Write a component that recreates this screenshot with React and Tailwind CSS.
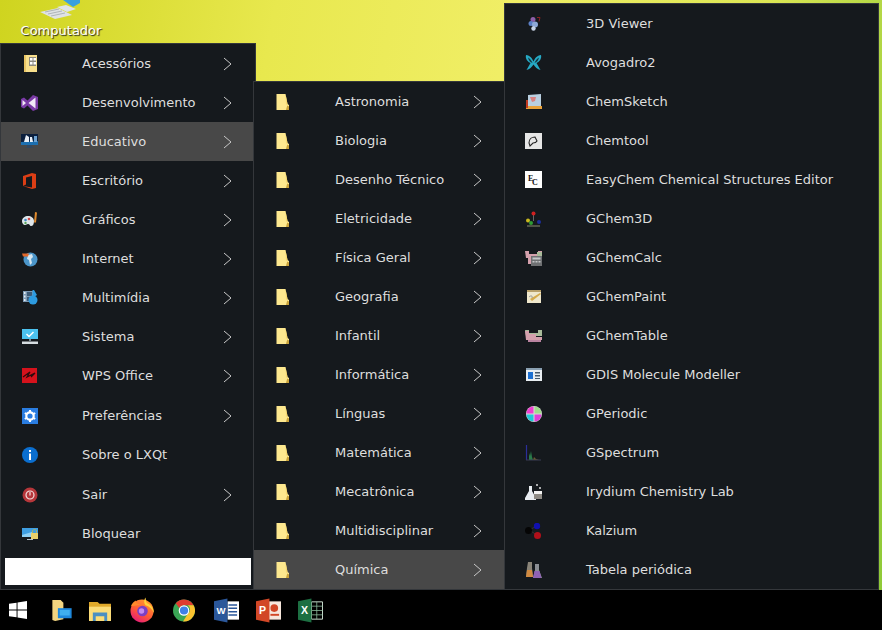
import React from "react";

const Chevron = () => (
  <svg width="9" height="14" viewBox="0 0 9 14" fill="none" className="shrink-0">
    <path d="M1 1l7 6-7 6" stroke="#c9c9c9" strokeWidth="1" />
  </svg>
);

const Folder = () => (
  <svg width="16" height="16" viewBox="0 0 16 16">
    <path d="M1.500 0h9l2 10 1.500 1v5H1.500z" fill="#fde88f" />
    <path d="M10.500 0l2 10-1.500 1z" fill="#f8d870" />
    <path d="M11 16l1.200-4.500 1.800 1V16z" fill="#c9a23a" />
  </svg>
);

// main menu icons
const icons = {
  acessorios: (
    <svg width="16" height="17" viewBox="0 0 16 17">
      <path d="M2 0h13v17H2z" fill="#f8df8c" />
      <path d="M2 0h2v17H2z" fill="#e9c565" />
      <path d="M7 2h7v9H7z" fill="#8d8a80" />
      <path d="M8 3h2.500v2.500H8zM11.500 3H14v2.500h-2.500zM8 7h2.500v2.500H8zM11.500 7H14v2.500h-2.500z" fill="#fff" />
    </svg>
  ),
  vs: (
    <svg width="17" height="16" viewBox="0 0 17 16">
      <path d="M12 0l5 2v12l-5 2-5.500-5.500L3 13.500 0 12V4l3-1.500L6.500 5.500z" fill="#7a3aa6" />
      <path d="M1.500 5v6L5 8zM14.500 2.500L7.500 8l7 5.500z" fill="#f1e8f7" />
    </svg>
  ),
  edu: (
    <svg width="17" height="15" viewBox="0 0 17 15">
      <path d="M0 0h17v11H0z" fill="#0b1f3d" />
      <path d="M0 8l17-1v4H0z" fill="#1c6fb0" />
      <path d="M5 1l3 2v5H3zM9 3h2l1 5H9z" fill="#e8eef5" />
      <path d="M13 2h3v6h-3z" fill="#6ea4d4" />
      <path d="M6 11h5v2l2 1H4l2-1z" fill="#33475e" />
    </svg>
  ),
  office: (
    <svg width="14" height="16" viewBox="0 0 14 16">
      <path d="M0 3l9-3 4 1v14l-4 1-9-3 9 1.500V3l-6 1.500v7L0 13z" fill="#dc3e15" />
    </svg>
  ),
  graficos: (
    <svg width="16" height="16" viewBox="0 0 16 16">
      <path d="M0 9c0-3 3-5 6-5s6 2 6 5-1 5-3 5c-1.500 0-1-2-3-2-1.500 0-2 1.500-3.500 1S0 11 0 9z" fill="#dfe6ea" />
      <circle cx="3.500" cy="8" r="1.300" fill="#3f87c9" />
      <circle cx="7" cy="7" r="1.300" fill="#d34b4b" />
      <circle cx="3.500" cy="11" r="1.200" fill="#58a55c" />
      <path d="M13 0l2 .5-1 10h-2z" fill="#e08a2e" />
    </svg>
  ),
  internet: (
    <svg width="16" height="16" viewBox="0 0 16 16">
      <circle cx="8.500" cy="8.500" r="7" fill="#4b95c9" />
      <path d="M6 4l4-1 1 3-2 2 1 4-2 2-1-5-2-1z" fill="#d7e6ef" />
      <path d="M0 2.500h7l-1 3H1z" fill="#e2682a" />
    </svg>
  ),
  multimidia: (
    <svg width="16" height="15" viewBox="0 0 16 15">
      <path d="M1 1h10v11H1z" fill="#7d99b3" />
      <path d="M2 2h1.500v2H2zM2 5.500h1.500v2H2zM2 9h1.500v2H2z" fill="#e5edf3" />
      <path d="M5 2h5v4H5zM5 7h5v4H5z" fill="#3d5a76" />
      <circle cx="11" cy="10" r="4.500" fill="#2d9be0" />
      <path d="M10.500 0h1.500l3 5-4.500 3z" fill="#2d9be0" />
    </svg>
  ),
  sistema: (
    <svg width="16" height="15" viewBox="0 0 16 15">
      <path d="M0 0h16v10H0z" fill="#4cc2ef" />
      <path d="M4.500 5l2.500 2.500L11.500 3" stroke="#fff" strokeWidth="1.500" fill="none" />
      <path d="M7 10h2v2H7z" fill="#7a8a94" />
      <path d="M0 12.500h16V15H0z" fill="#d6dde1" />
    </svg>
  ),
  wps: (
    <svg width="15" height="15" viewBox="0 0 15 15">
      <path d="M0 0h15v15H0z" fill="#d5121c" />
      <path d="M1 9l7-5-3 5 8-4-4 4" stroke="#2d0a0c" strokeWidth="1.200" fill="none" />
    </svg>
  ),
  preferencias: (
    <svg width="16" height="16" viewBox="0 0 16 16">
      <path d="M0 0h16v16H0z" fill="#2a7de1" />
      <circle cx="8" cy="8" r="3.700" fill="none" stroke="#fff" strokeWidth="2.200" />
      <path d="M8 2v2M8 12v2M2.800 5l1.700 1M11.500 10l1.700 1M2.800 11l1.700-1M11.500 6l1.700-1" stroke="#fff" strokeWidth="2" />
    </svg>
  ),
  sobre: (
    <svg width="16" height="16" viewBox="0 0 16 16">
      <circle cx="8" cy="8" r="8" fill="#0b6fd0" />
      <path d="M7 3h2v2H7zM7 6.500h2V13H7z" fill="#fff" />
    </svg>
  ),
  sair: (
    <svg width="16" height="16" viewBox="0 0 16 16">
      <circle cx="8" cy="8" r="7.500" fill="#b5363a" />
      <circle cx="8" cy="8" r="4" fill="none" stroke="#f3dede" strokeWidth="1.200" />
      <path d="M8 5v3.500" stroke="#f3dede" strokeWidth="1.200" />
    </svg>
  ),
  bloquear: (
    <svg width="16" height="14" viewBox="0 0 16 14">
      <path d="M0 1h16v9H0z" fill="#3f9fe2" />
      <path d="M0 8l10-3v5H0z" fill="#8ed0f5" />
      <path d="M5 12h6v1H5z" fill="#b9c2c8" />
      <path d="M9 6h7v6H9z" fill="#e8cf6a" />
      <path d="M10.500 6V4c0-2 4-2 4 0v2" stroke="#a9b06a" fill="none" />
    </svg>
  ),
};

// chemistry app icons
const apps = {
  viewer: (
    <svg width="16" height="16" viewBox="0 0 16 16">
      <circle cx="7" cy="3.500" r="2.500" fill="#8d5fa8" />
      <circle cx="5" cy="7.500" r="2.500" fill="#5b7fc4" />
      <circle cx="9" cy="8.500" r="3" fill="#8fa9d8" />
      <circle cx="7.500" cy="12.500" r="2.200" fill="#c9d4e6" />
      <path d="M11 1.500h3l-1 4" stroke="#8a2020" fill="none" />
    </svg>
  ),
  avogadro: (
    <svg width="17" height="16" viewBox="0 0 17 16">
      <path d="M1 0c4 0 6.500 4 7.500 6.500C9.500 4 12 0 16 0c1 4-2 7-4.500 8l4 7c-3-.5-5.500-3-7-5.500C7 12 4.500 14.500 1.500 15l4-7C3 7 0 4 1 0z" fill="#26a9c4" />
      <path d="M3 2.500c2 1 3.500 3 4.500 5.500-2-.5-4-2.500-4.500-5.500zM14 2.500c-2 1-3.500 3-4.500 5.500 2-.5 4-2.500 4.500-5.500z" fill="#14343e" />
    </svg>
  ),
  chemsketch: (
    <svg width="16" height="16" viewBox="0 0 16 16">
      <path d="M2 1l13-1v12H2z" fill="#b9cfe0" />
      <path d="M4 3h6l-1 4-3 1z" fill="#d88080" />
      <path d="M0 12h16v3H0z" fill="#e8a13a" />
      <path d="M0 6h2v8H0z" fill="#c23a20" />
    </svg>
  ),
  chemtool: (
    <svg width="17" height="16" viewBox="0 0 17 16">
      <path d="M0 0h17v16H0z" fill="#e6e6e6" />
      <path d="M4 10c0-4 3-6 6-6l2 4c-1 2-3 2-4 2l-3 3z" fill="none" stroke="#222" strokeWidth="1.100" />
    </svg>
  ),
  easychem: (
    <svg width="17" height="17" viewBox="0 0 17 17">
      <path d="M0 0h17v17H0z" fill="#fff" />
      <text x="3" y="10" fontSize="8" fontFamily="Liberation Serif" fontWeight="700" fill="#111">E</text>
      <text x="7" y="14" fontSize="8" fontFamily="Liberation Serif" fontWeight="700" fill="#111">C</text>
    </svg>
  ),
  gchem3d: (
    <svg width="17" height="16" viewBox="0 0 17 16">
      <path d="M8.500 3v7" stroke="#666" />
      <circle cx="8.500" cy="2.500" r="2" fill="#d02020" />
      <circle cx="3" cy="9.500" r="2" fill="#c9b81e" />
      <circle cx="6" cy="12" r="2" fill="#2f9c33" />
      <circle cx="14" cy="11" r="2" fill="#1c2f9c" />
      <path d="M2 15h13" stroke="#8b8f70" />
    </svg>
  ),
  gchemcalc: (
    <svg width="17" height="16" viewBox="0 0 17 16">
      <path d="M0 1h4v3h9V1h4v7H6v6H3V8H1z" fill="#d4a0ac" />
      <path d="M12 2h5v6h-5z" fill="#a9bb9a" />
      <path d="M6 6h11v10H6z" fill="#6e7072" />
      <path d="M7.500 7.500h8v2h-8zM7.500 11h2v1.500h-2zM10.500 11h2v1.500h-2zM13.500 11h2v1.500h-2z" fill="#c4c6c8" />
    </svg>
  ),
  gchempaint: (
    <svg width="16" height="15" viewBox="0 0 16 15">
      <path d="M1 1h14v13H1z" fill="#efe7cc" />
      <path d="M1 1h14v2H1z" fill="#b79f6a" />
      <path d="M4 10l10-6 1 1-9 7z" fill="#d4a94a" />
      <path d="M3 8c2-2 4-1 3 1" stroke="#999" fill="none" />
    </svg>
  ),
  gchemtable: (
    <svg width="17" height="13" viewBox="0 0 17 13">
      <path d="M0 1h4v3h9V1h4v6H1z" fill="#a9bb9a" />
      <path d="M0 2h4v3h7v3h6v3H1z" fill="#d4a0ac" />
      <path d="M3 11h13v2H3z" fill="#b983a0" />
    </svg>
  ),
  gdis: (
    <svg width="16" height="13" viewBox="0 0 16 13">
      <path d="M0 0h16v13H0z" fill="#e9eef2" />
      <path d="M0 0h16v2H0z" fill="#8aa0b2" />
      <path d="M2 4h5v7H2z" fill="#1c6fd1" />
      <path d="M9 4h5v1.500H9zM9 7h5v1.500H9zM9 10h5v1H9z" fill="#46586a" />
    </svg>
  ),
  gperiodic: (
    <svg width="16" height="16" viewBox="0 0 16 16">
      <circle cx="8" cy="8" r="8" fill="#d9d9d9" />
      <path d="M7.500 7.500V.5A7 7 0 0 0 .5 7.500z" fill="#ee3fd0" />
      <path d="M8.500 7.500V.5a7 7 0 0 1 7 7z" fill="#9fdc8a" />
      <path d="M7.500 8.500v7a7 7 0 0 1-7-7z" fill="#22c8d8" />
      <path d="M8.500 8.500v7a7 7 0 0 0 7-7z" fill="#e03fd8" />
    </svg>
  ),
  gspectrum: (
    <svg width="17" height="16" viewBox="0 0 17 16">
      <path d="M1.500 0v15" stroke="#2b2f9a" strokeWidth="1.200" />
      <path d="M4 15V8l1 3 1-5 1 6 1 3z" fill="#2a7b4a" />
      <path d="M8 15l1-3 2 2 3 1z" fill="#6c5a30" />
      <path d="M1 15h15" stroke="#3a3d55" />
    </svg>
  ),
  irydium: (
    <svg width="17" height="17" viewBox="0 0 17 17">
      <path d="M4 3h3v5l4 7v2H0v-2l4-7z" fill="#e9edf1" />
      <path d="M9 8h8v8H9z" fill="#8e8a84" />
      <path d="M9 8h8v3H9z" fill="#f3f3f3" />
      <circle cx="12" cy="2" r="1" fill="#ddd" />
      <circle cx="15" cy="5" r="1" fill="#ddd" />
    </svg>
  ),
  kalzium: (
    <svg width="17" height="16" viewBox="0 0 17 16">
      <path d="M4 7l8-4M4 7l8 5" stroke="#333" />
      <circle cx="12" cy="3" r="3.200" fill="#1010b0" />
      <circle cx="3.500" cy="7.500" r="3.500" fill="#050505" />
      <circle cx="12.500" cy="12.500" r="3.500" fill="#b0101a" />
    </svg>
  ),
  tabela: (
    <svg width="16" height="16" viewBox="0 0 16 16">
      <path d="M2 0h4v6l1 9H0l1-9z" fill="#8a8478" />
      <path d="M1 8h5l1 7H0z" fill="#d08a40" />
      <path d="M9 2h4v6l3 8H7l2-8z" fill="#8b8e94" />
      <path d="M8.500 9h5l2 7H7z" fill="#8f62b3" />
    </svg>
  ),
};

const mainItems = [
  { label: "Acessórios", icon: icons.acessorios, sub: true },
  { label: "Desenvolvimento", icon: icons.vs, sub: true },
  { label: "Educativo", icon: icons.edu, sub: true, active: true },
  { label: "Escritório", icon: icons.office, sub: true },
  { label: "Gráficos", icon: icons.graficos, sub: true },
  { label: "Internet", icon: icons.internet, sub: true },
  { label: "Multimídia", icon: icons.multimidia, sub: true },
  { label: "Sistema", icon: icons.sistema, sub: true },
  { label: "WPS Office", icon: icons.wps, sub: true },
  { label: "Preferências", icon: icons.preferencias, sub: true, tall: true },
  { label: "Sobre o LXQt", icon: icons.sobre },
  { label: "Sair", icon: icons.sair, sub: true, tall: true },
  { label: "Bloquear", icon: icons.bloquear },
];

const categories = [
  "Astronomia", "Biologia", "Desenho Técnico", "Eletricidade", "Física Geral", "Geografia", "Infantil",
  "Informática", "Línguas", "Matemática", "Mecatrônica", "Multidisciplinar", "Química",
];

const appItems = [
  { label: "3D Viewer", icon: apps.viewer },
  { label: "Avogadro2", icon: apps.avogadro },
  { label: "ChemSketch", icon: apps.chemsketch },
  { label: "Chemtool", icon: apps.chemtool },
  { label: "EasyChem Chemical Structures Editor", icon: apps.easychem },
  { label: "GChem3D", icon: apps.gchem3d },
  { label: "GChemCalc", icon: apps.gchemcalc },
  { label: "GChemPaint", icon: apps.gchempaint },
  { label: "GChemTable", icon: apps.gchemtable },
  { label: "GDIS Molecule Modeller", icon: apps.gdis },
  { label: "GPeriodic", icon: apps.gperiodic },
  { label: "GSpectrum", icon: apps.gspectrum },
  { label: "Irydium Chemistry Lab", icon: apps.irydium },
  { label: "Kalzium", icon: apps.kalzium },
  { label: "Tabela periódica", icon: apps.tabela },
];

const Row = ({ icon, label, sub, active, tall, chevronGap }) => (
  <div className={`flex items-center ${tall ? "h-[40px] pt-[1px]" : "h-[39px]"} ${active ? "bg-[#484848]" : ""}`}>
    <div className="ml-[20px] flex w-[17px] shrink-0 items-center justify-center">{icon}</div>
    <span className="ml-[44px] flex-1 text-[13px] whitespace-nowrap text-[#dedede]">{label}</span>
    {sub && <div className={chevronGap}><Chevron /></div>}
  </div>
);

const menuClass = "absolute border border-[#34373b] bg-[#15191d]";

// taskbar icons
const Taskbar = () => (
  <div className="flex h-[40px] items-center bg-black">
    <svg width="18" height="18" viewBox="0 0 19 19" className="ml-[9px]">
      <path d="M0 3l8-1.200V9H0zM9 1.600L19 0v9H9zM0 10h8v7.200L0 16zM9 10h10v9L9 17.400z" fill="#fff" />
    </svg>
    <svg width="20" height="22" viewBox="0 0 21 24" className="ml-[25px]">
      <path d="M0 1h9l3 3v18l-9 2-3-1z" fill="#f3d580" />
      <path d="M6 10h15v11H6z" fill="#1e88dc" />
      <path d="M8 12h11v6H8z" fill="#3fb0f0" />
    </svg>
    <svg width="22" height="21" viewBox="0 0 23 22" className="ml-[17px]">
      <path d="M0 2h9l2 2h12v18H0z" fill="#e0a92a" />
      <path d="M0 7h23v15H0z" fill="#fbdc78" />
      <path d="M4 13h15v9h-3v-5H7v5H4z" fill="#4a8fc2" />
    </svg>
    <svg width="25" height="26" viewBox="0 0 26 26" className="ml-[19px]">
      <defs>
        <linearGradient id="fx" x1="0.800" y1="0" x2="0.200" y2="1">
          <stop offset="0" stopColor="#ffa02e" />
          <stop offset="0.550" stopColor="#ff5a36" />
          <stop offset="1" stopColor="#e3157f" />
        </linearGradient>
      </defs>
      <circle cx="12.500" cy="14" r="12" fill="url(#fx)" />
      <path d="M16 0c1 3 0 4 2 6 4 2 7 6 7 10-2-4-5-7-9-8-2-3-1-6 0-8z" fill="#ffd23a" />
      <path d="M1 9c1-3 3-5 5-6 0 3 3 4 6 4-4 1-7 2-11 2z" fill="#ff8a2c" />
      <circle cx="13" cy="14" r="5.500" fill="#7b3fc4" />
      <circle cx="12" cy="14" r="2.800" fill="#c58bf0" />
    </svg>
    <svg width="22" height="23" viewBox="0 0 23 23" className="ml-[18px]">
      <circle cx="11.500" cy="11.500" r="11.500" fill="#3aa655" />
      <path d="M11.500 0a11.500 11.500 0 0 1 10 6H11.500a5.500 5.500 0 0 0-5 3L2.800 4A11.500 11.500 0 0 1 11.500 0z" fill="#df3b30" />
      <path d="M21.500 6a11.500 11.500 0 0 1-11 17l5-8a5.500 5.500 0 0 0 0-9z" fill="#fbc22f" />
      <circle cx="11.500" cy="11.500" r="5.500" fill="#fff" />
      <circle cx="11.500" cy="11.500" r="4.300" fill="#3f80e8" />
    </svg>
    <svg width="25" height="25" viewBox="0 0 26 25" className="ml-[19px]">
      <path d="M14 3h12v19H14z" fill="#fff" />
      <path d="M15 6h9v1.500h-9zM15 9.500h9V11h-9zM15 13h9v1.500h-9zM15 16.500h9V18h-9z" fill="#2b579a" />
      <path d="M0 3l14-3v25L0 22z" fill="#2b579a" />
      <text x="2.500" y="16" fontSize="10" fontWeight="700" fontFamily="Liberation Sans" fill="#fff">W</text>
    </svg>
    <svg width="25" height="25" viewBox="0 0 26 25" className="ml-[17px]">
      <path d="M13 3h13v19H13z" fill="#f7e7dc" />
      <circle cx="19" cy="10" r="4" fill="#d24726" />
      <path d="M15 16h9v2h-9z" fill="#d24726" />
      <path d="M0 3l14-3v25L0 22z" fill="#d24726" />
      <text x="3" y="16.500" fontSize="11" fontWeight="700" fontFamily="Liberation Sans" fill="#fff">P</text>
    </svg>
    <svg width="25" height="25" viewBox="0 0 26 25" className="ml-[17px]">
      <path d="M14 3.500h11.500v18H14z" fill="none" stroke="#cfe3d4" />
      <path d="M19.500 3.500v18M14 8h11.500M14 12.500h11.500M14 17h11.500" stroke="#8fbf9f" strokeWidth="0.800" />
      <path d="M0 3l14-3v25L0 22z" fill="#1d6f42" />
      <text x="3" y="16.500" fontSize="11" fontWeight="700" fontFamily="Liberation Sans" fill="#fff">X</text>
    </svg>
  </div>
);

export default function App() {
  return (
    <div className="flex h-[630px] w-[882px] flex-col overflow-hidden font-['DejaVu_Sans',sans-serif]">
      <div className="relative flex-1 bg-[linear-gradient(100deg,#cfd41f_0%,#e8e84e_28%,#f0ee66_52%,#dce654_78%,#8fca38_100%)]">
        {/* desktop icon */}
        <div className="flex w-[122px] flex-col items-center">
          <svg width="44" height="20" viewBox="0 0 44 20">
            <path d="M24 0h17v3l-7 4z" fill="#3aa0de" />
            <path d="M18 7l9-2 10 4-9 3z" fill="#dfe4e8" />
            <path d="M1 12l18-4 14 7-17 4z" fill="#dfe2e5" />
            <path d="M6 12l14-3M9 14l14-3M12 16l14-3" stroke="#9aa0a5" strokeWidth="0.700" />
          </svg>
          <span className="mt-[3px] text-[13px] leading-[15px] text-white [text-shadow:1px_1px_1px_#222]">Computador</span>
        </div>

        {/* main menu */}
        <div className={`${menuClass} top-[43px] left-0 h-[547px] w-[256px]`}>
          {mainItems.map((it) => (
            <Row key={it.label} {...it} chevronGap="mr-[23px]" />
          ))}
          <input className="mx-[4px] mt-[5px] block h-[27px] w-[246px] bg-white" />
        </div>

        {/* category submenu */}
        <div className={`${menuClass} top-[81px] left-[253px] h-[509px] w-[252px]`}>
          {categories.map((c) => (
            <Row key={c} label={c} icon={<Folder />} sub active={c === "Química"} chevronGap="mr-[22px]" />
          ))}
        </div>

        {/* apps submenu */}
        <div className={`${menuClass} top-[3px] left-[504px] h-[587px] w-[375px]`}>
          {appItems.map((a) => (
            <Row key={a.label} {...a} />
          ))}
        </div>
      </div>
      <Taskbar />
    </div>
  );
}
